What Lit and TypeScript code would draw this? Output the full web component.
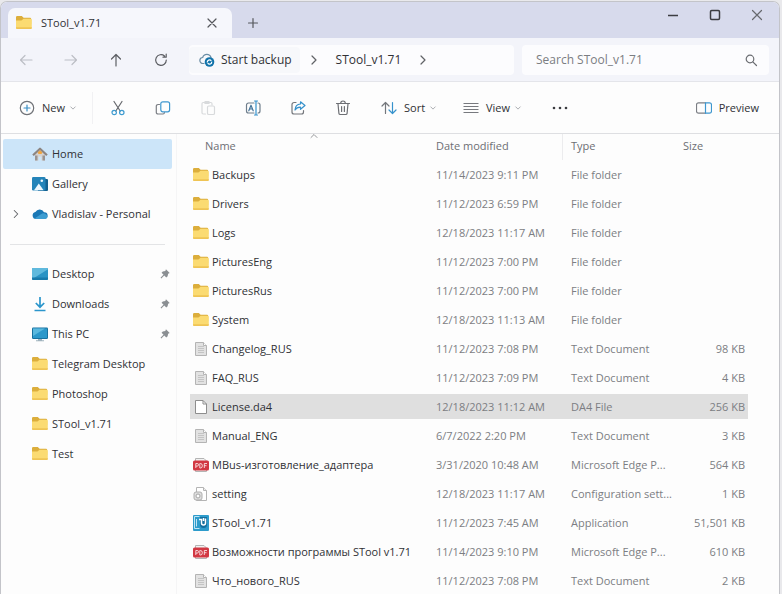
import { LitElement, html, svg, css, nothing } from "lit";
import { customElement, property } from "lit/decorators.js";
import { classMap } from "lit/directives/class-map.js";

const folder = svg`
  <path fill="#dcae3c" d="M0 2.200a1.200 1.200 0 0 1 1.200-1.200h4.600l1.800 1.800H14a1.200 1.200 0 0 1 1.200 1.200V9H0z"/>
  <path fill="#fbdb72" d="M0 5.600h5.400L7.600 3.800H14.600A1.200 1.200 0 0 1 15.800 5V12.800a1.200 1.200 0 0 1-1.200 1.200H1.200A1.200 1.200 0 0 1 0 12.800z"/>
  <path fill="#efc455" d="M0 12.200h15.800v.6a1.200 1.200 0 0 1-1.200 1.200H1.200A1.200 1.200 0 0 1 0 12.800z"/>`;

const icons: Record<string, unknown> = {
  folder,
  doc: svg`
    <path fill="#e2e2e2" stroke="#b4b4b4" d="M2.500 1.500h8l3 3v10h-11z"/>
    <path fill="none" stroke="#c4c4c4" d="M5 5.500h6M5 7.500h6M5 9.500h6M5 11.500h6"/>
    <path fill="#fff" stroke="#b4b4b4" d="M10.500 1.500v3h3"/>`,
  blank: svg`
    <path fill="#fff" stroke="#8d8d8d" d="M2.500 1.500h7.500l3.500 3.500v9.500h-11z"/>
    <path fill="none" stroke="#8d8d8d" d="M10 1.500v3.500h3.500"/>`,
  setting: svg`
    <path fill="#fff" stroke="#b4b4b4" d="M3.500 1.500h7l3 3v10h-10z"/>
    <path fill="#eee" stroke="#b4b4b4" d="M10.500 1.500v3h3"/>
    <rect x="1" y="6" width="8" height="8" rx="2" fill="#dedede" stroke="#b0b0b0"/>
    <circle cx="5" cy="10" r="2" fill="#fff" stroke="#a5a5a5"/>`,
  pdf: svg`
    <path fill="#f2f2f2" stroke="#b4b4b4" d="M2.500 1.500h8.500l2.500 2.500v10.500h-11z"/>
    <rect x="0" y="3.500" width="16" height="10" rx="1.500" fill="#d23843"/>
    <path fill="none" stroke="#fff" stroke-width=".9" opacity=".85" d="M2.800 11V6.500h1.400a1.200 1.200 0 0 1 0 2.600H2.800M6.800 6.500V11h.8a1.700 2.200 0 0 0 0-4.500zM11.300 11V6.500H14M11.300 8.700h2.200"/>`,
  app: svg`
    <rect width="16" height="16" rx="1" fill="#2d9bcb"/>
    <path fill="none" stroke="#bfe4f4" d="M1.500 1.500h5M1.500 1.500v12h5M3.500 4v7.500"/>
    <path fill="#126e9e" d="M7 2h7v7.500a3.500 3.500 0 0 1-7 0z"/>
    <path fill="none" stroke="#fff" stroke-width="1.500" d="M6 4.500h3M8.500 4v4a2 2 0 0 0 4 0V3.500M10.500 3v3"/>`,
  home: svg`
    <path fill="#d5d2d0" d="M3 7.500 8 3l5 4.500V14.500h-3.500v-4h-3v4H3z"/>
    <path fill="none" stroke="#8c8582" stroke-width="2.200" stroke-linejoin="round" d="M1 9.300 8 2.700l7 6.600"/>
    <path fill="#f0a540" d="M8 4.300 10.300 6.500 9.500 8h-3l-.8-1.500z"/>
    <path fill="#9b9491" d="M3 9.500h2.500v5H3zM10.500 9.500H13v5h-2.500z"/>`,
  gallery: svg`
    <path fill="#14618f" d="M4 3h11a1 1 0 0 1 1 1v10a1 1 0 0 1-1 1H6z"/>
    <rect x="0" y="1" width="13.500" height="13.500" rx="1.300" fill="#2484b9"/>
    <path fill="#eef8fd" d="m2 14.300 4.800-6.700 4.800 6.700z"/>
    <circle cx="9.800" cy="4.700" r="1.300" fill="#eef8fd"/>`,
  cloud: svg`
    <path fill="#1b78b5" d="M4 13a3.600 3.600 0 0 1-.6-7.100A4.800 4.800 0 0 1 12 6.200 3.400 3.400 0 0 1 12.500 13z"/>
    <path fill="#3d9dd2" d="M2.500 12.500 9 8.200a4 4 0 0 1 6.500 2.800A2.800 2.800 0 0 1 12.800 13H4z"/>`,
  desktop: svg`
    <rect x="0" y="2" width="16" height="12" rx="1.300" fill="#2a93c4"/>
    <path fill="#5fb9dd" d="M1.300 2h13.400A1.300 1.300 0 0 1 16 3.300L2 12H0V3.300A1.300 1.300 0 0 1 1.300 2z"/>
    <path fill="#187aab" d="M0 11.500h16v1.200a1.300 1.300 0 0 1-1.300 1.300H1.300A1.300 1.300 0 0 1 0 12.700z"/>`,
  downloads: svg`
    <path fill="none" stroke="#2b96cc" stroke-width="1.700" d="M8 1v10M3.800 7 8 11.200 12.200 7"/>
    <path stroke="#2b96cc" stroke-width="1.500" d="M2.500 14.500h11"/>`,
  pc: svg`
    <rect x="0" y="1.500" width="16" height="11.500" rx="1.300" fill="#17719f"/>
    <rect x="1" y="2.500" width="14" height="9.500" fill="#2c98ca"/>
    <path fill="#5ab8de" d="M1 2.500h12L1 10z"/>
    <path fill="#9fb2bd" d="M6 13h4v1.200h2v1H4v-1h2z"/>`,
  pin: svg`
    <path fill="#8b8f93" d="M9.500 0.500 15.500 6.500 13 7.500 12.200 11.500 10 13.500 2.500 6 4.500 3.800 8.500 3z"/>
    <path stroke="#8b8f93" stroke-width="1.800" d="M6.500 9.500 1.500 14.500"/>`,
  back: svg`<path class="ln" stroke="#bcbec5" d="M14 8H2.500M7 3.500 2.500 8 7 12.500"/>`,
  forward: svg`<path class="ln" stroke="#bcbec5" d="M2 8h11.500M9 3.500 13.500 8 9 12.500"/>`,
  up: svg`<path class="ln" stroke="#5c5e63" d="M8 14V2.500M3.500 7 8 2.500 12.500 7"/>`,
  refresh: svg`<path class="ln" stroke="#5c5e63" d="M13.300 8A5.300 5.300 0 1 1 11.500 4M13.200 2v3.200H10"/>`,
  backup: svg`
    <path class="ln" stroke="#6b8ea5" d="M5 11.500H4a3 3 0 0 1-.3-6 4.300 4.300 0 0 1 8.300 0"/>
    <circle cx="10.500" cy="10" r="4.800" fill="#1173aa"/>
    <path fill="none" stroke="#fff" stroke-width="1.200" d="M8.300 10.500a2.200 2.200 0 0 1 4-1.600M12.700 9.600a2.200 2.200 0 0 1-4 1.600"/>`,
  right: svg`<path class="ln" stroke="#606266" d="m6 4 4 4-4 4"/>`,
  down: svg`<path class="ln" stroke="#a3a5a9" d="m5 6.500 3 3 3-3"/>`,
  caret: svg`<path class="ln" stroke="#8a8c90" d="m4 10 4-4 4 4"/>`,
  search: svg`<circle class="ln" stroke="#6b6d72" cx="7" cy="7" r="3.800"/><path class="ln" stroke="#6b6d72" d="m9.800 9.800 3.700 3.700"/>`,
  close: svg`<path class="ln" stroke="#55575c" d="m4 4 8 8M12 4l-8 8"/>`,
  shut: svg`<path class="ln" stroke="#66686d" d="m3.500 3.500 9 9M12.500 3.500l-9 9"/>`,
  plus: svg`<path class="ln" stroke="#55575c" d="M8 3.500v9M3.500 8h9"/>`,
  minimize: svg`<path stroke="#3c3d42" stroke-width="1.400" d="M3 8.500h10"/>`,
  maximize: svg`<rect x="3.500" y="3.500" width="9" height="9" rx="1.200" fill="none" stroke="#3c3d42" stroke-width="1.500"/>`,
  add: svg`<circle class="ln" stroke="#707378" cx="8" cy="8" r="6.700"/><path class="ln" stroke="#3b8fc5" d="M8 5v6M5 8h6"/>`,
  cut: svg`
    <path class="ln" stroke="#66686d" d="M4 1.500 10.200 11M12 1.500 5.800 11"/>
    <circle class="ln" stroke="#3e9bd0" cx="4.200" cy="12.500" r="2.200"/>
    <circle class="ln" stroke="#3e9bd0" cx="11.800" cy="12.500" r="2.200"/>`,
  copy: svg`
    <path class="ln" stroke="#7b7e84" d="M4.500 4.500H3A1.700 1.700 0 0 0 1.300 6.200v6A1.700 1.700 0 0 0 3 14h5a1.700 1.700 0 0 0 1.500-1.500"/>
    <rect class="ln" stroke="#3e97cf" x="5.800" y="1.800" width="8.800" height="10" rx="2"/>`,
  paste: svg`
    <path class="ln" stroke="#d8dadc" d="M5.500 14H3.200A1.200 1.200 0 0 1 2 12.800V3.700a1.200 1.200 0 0 1 1.200-1.200h7.600A1.200 1.200 0 0 1 12 3.700V5M5 1.500h4v2H5z"/>
    <rect class="ln" stroke="#d8dadc" x="7.500" y="6" width="7" height="8.500" rx="1.300"/>`,
  rename: svg`
    <path class="ln" stroke="#6f7e8c" d="M9 3H3.500a2 2 0 0 0-2 2v6a2 2 0 0 0 2 2H9M13 3a2 2 0 0 1 2 2v6a2 2 0 0 1-2 2"/>
    <path class="ln" stroke="#3692cc" d="M11 1.500v13M9.500 1h3M9.500 15h3"/>
    <path class="ln" stroke="#44749a" d="m3.800 10.800 2.200-5.600 2.200 5.600M4.600 9h2.800"/>`,
  share: svg`
    <path class="ln" stroke="#74777c" d="M6 2.500H4a2 2 0 0 0-2 2V12a2 2 0 0 0 2 2h7.500a2 2 0 0 0 2-2v-1.500"/>
    <path class="ln" stroke="#3692cc" d="M10.500 1.800 15 5.500l-4.500 3.800V7.200C7.800 7.100 6.300 8 5 10c.2-3.300 2-5.800 5.500-6z"/>`,
  trash: svg`<path class="ln" stroke="#6d6f74" d="M1.500 3.500h13M5.700 3.300a2.300 2.300 0 0 1 4.600 0M3 3.700l.9 9.600a1.400 1.400 0 0 0 1.400 1.200h5.400a1.400 1.400 0 0 0 1.400-1.200l.9-9.600M6.600 6.500v5M9.400 6.500v5"/>`,
  sort: svg`
    <path class="ln" stroke="#74777c" d="M4.500 13.500v-11M1 6l3.500-3.500L8 6"/>
    <path class="ln" stroke="#3692cc" d="M11.500 2.500v11M8 10l3.500 3.500L15 10"/>`,
  view: svg`<path stroke="#77797e" d="M.5 3.500h15M.5 6.500h15M.5 9.500h15M.5 12.500h15"/>`,
  more: svg`<circle cx="2" cy="8" r="1.300" fill="#3b3c40"/><circle cx="8" cy="8" r="1.300" fill="#3b3c40"/><circle cx="14" cy="8" r="1.300" fill="#3b3c40"/>`,
  preview: svg`
    <path class="ln" stroke="#7b7e84" d="M9.500 2.800h-7a2 2 0 0 0-2 2v6.400a2 2 0 0 0 2 2h7"/>
    <path class="ln" stroke="#3e97cf" d="M9.500 2.800h4a2 2 0 0 1 2 2v6.400a2 2 0 0 1-2 2h-4z"/>`,
};

@customElement("fx-icon")
class FxIcon extends LitElement {
  @property() name = "folder";

  static styles = css`
    :host { display: inline-flex; flex: none; width: 16px; height: 16px; }
    .art { width: 100%; height: 100%; }
    .ln { fill: none; stroke-width: 1.2; stroke-linecap: round; stroke-linejoin: round; }
  `;

  render() {
    return html`<svg class="art" viewBox="0 0 16 16" aria-hidden="true">${icons[this.name]}</svg>`;
  }
}

interface Place { icon: string; label: string; pinned?: boolean; expands?: boolean; current?: boolean }

const topPlaces: Place[] = [
  { icon: "home", label: "Home", current: true },
  { icon: "gallery", label: "Gallery" },
  { icon: "cloud", label: "Vladislav - Personal", expands: true },
];

const quickPlaces: Place[] = [
  { icon: "desktop", label: "Desktop", pinned: true },
  { icon: "downloads", label: "Downloads", pinned: true },
  { icon: "pc", label: "This PC", pinned: true },
  { icon: "folder", label: "Telegram Desktop" },
  { icon: "folder", label: "Photoshop" },
  { icon: "folder", label: "STool_v1.71" },
  { icon: "folder", label: "Test" },
];

const files: [string, string, string, string, string][] = [
  ["folder", "Backups", "11/14/2023 9:11 PM", "File folder", ""],
  ["folder", "Drivers", "11/12/2023 6:59 PM", "File folder", ""],
  ["folder", "Logs", "12/18/2023 11:17 AM", "File folder", ""],
  ["folder", "PicturesEng", "11/12/2023 7:00 PM", "File folder", ""],
  ["folder", "PicturesRus", "11/12/2023 7:00 PM", "File folder", ""],
  ["folder", "System", "12/18/2023 11:13 AM", "File folder", ""],
  ["doc", "Changelog_RUS", "11/12/2023 7:08 PM", "Text Document", "98 KB"],
  ["doc", "FAQ_RUS", "11/12/2023 7:09 PM", "Text Document", "4 KB"],
  ["blank", "License.da4", "12/18/2023 11:12 AM", "DA4 File", "256 KB"],
  ["doc", "Manual_ENG", "6/7/2022 2:20 PM", "Text Document", "3 KB"],
  ["pdf", "MBus-изготовление_адаптера", "3/31/2020 10:48 AM", "Microsoft Edge P...", "564 KB"],
  ["setting", "setting", "12/18/2023 11:17 AM", "Configuration sett...", "1 KB"],
  ["app", "STool_v1.71", "11/12/2023 7:45 AM", "Application", "51,501 KB"],
  ["pdf", "Возможности программы STool v1.71", "11/14/2023 9:10 PM", "Microsoft Edge P...", "610 KB"],
  ["doc", "Что_нового_RUS", "11/12/2023 7:08 PM", "Text Document", "2 KB"],
];

@customElement("app-root")
class AppRoot extends LitElement {
  @property() selected = "License.da4";

  static styles = css`
    :host {
      display: block;
      height: 100vh;
      box-sizing: border-box;
      padding: 1px 2px 0 0;
      background: #e9e9ec;
      color: #303135;
      font: 11px/16px "Open Sans", "Noto Sans", sans-serif;
    }
    * { box-sizing: border-box; }
    button, input { font: inherit; color: inherit; border: 0; background: none; padding: 0; margin: 0; }
    button { display: inline-flex; align-items: center; justify-content: center; }
    a { color: inherit; text-decoration: none; }
    .window {
      display: flex;
      flex-direction: column;
      height: 100%;
      border: 1px solid #c3c4c9;
      border-bottom: 0;
      border-radius: 7px 7px 0 0;
      background: #fdfdfd;
      overflow: hidden;
    }
    .titlebar { display: flex; flex: none; height: 36px; padding: 0 1px 0 7px; background: #d7daec; }
    .tab {
      display: flex;
      align-items: center;
      width: 224px;
      margin-top: 6px;
      padding: 0 12px 0 8px;
      gap: 9px;
      border-radius: 7px 7px 0 0;
      background: #f6f7fc;
      font-weight: 500;
    }
    .tab-title { flex: 1; }
    .new-tab { width: 42px; padding-top: 6px; }
    .controls { display: flex; margin-left: auto; }
    .control { width: 42px; height: 25px; }
    .navbar {
      display: flex;
      flex: none;
      align-items: center;
      height: 44px;
      padding-right: 10px;
      background: #f3f4fa;
      border-bottom: 1px solid #e4e5ea;
      font-size: 12px;
    }
    .nav-buttons { display: flex; padding: 0 6px 0 2px; }
    .nav-button { width: 45px; height: 30px; }
    .address {
      display: flex;
      align-items: center;
      flex: 325;
      height: 30px;
      border-radius: 4px;
      background: #fcfcfe;
    }
    .crumb { height: 26px; padding: 0 8px; gap: 6px; border-radius: 4px; }
    .crumb-root { padding-left: 10px; background: #f7f8fb; }
    .crumb-step { width: 28px; height: 26px; }
    .search {
      display: flex;
      align-items: center;
      flex: 223;
      height: 30px;
      margin-left: 8px;
      padding: 0 10px 0 14px;
      border-radius: 4px;
      background: #fcfcfe;
    }
    .search-box { flex: 1; min-width: 0; outline: 0; }
    .search-box::placeholder { color: #7b7d82; opacity: 1; }
    .toolbar {
      display: flex;
      flex: none;
      align-items: center;
      height: 52px;
      padding-right: 20px;
      border-bottom: 1px solid #dedfe2;
    }
    .tool { width: 45px; height: 32px; }
    .menu { justify-content: flex-start; height: 32px; gap: 2px; }
    .menu-label { padding-left: 5px; }
    .menu-new { width: 92px; padding-left: 18px; margin-right: 2px; border-right: 1px solid #f1f1f3; }
    .menu-sort, .menu-view { width: 82px; padding-left: 16px; }
    .tool-more { margin-left: 8px; }
    .menu-preview { margin-left: auto; }
    .chevron { width: 12px; height: 12px; }
    .body { display: flex; flex: 1; min-height: 0; }
    .sidebar { flex: none; width: 176px; padding: 5px 4px 0 2px; border-right: 1px solid #f5f5f6; }
    .place { display: flex; align-items: center; height: 30px; padding-right: 2px; border-radius: 2px; }
    .place.current { background: #cce5f9; }
    .expander { display: flex; justify-content: center; width: 29px; padding-right: 3px; }
    .expander fx-icon { width: 14px; height: 14px; }
    .place-label { flex: 1; padding-left: 4px; }
    .pin { width: 10px; height: 10px; }
    .rule { height: 1px; margin: 15px 7px 14px; border: 0; background: #e3e4e6; }
    .pane { flex: 1; min-width: 0; padding: 0 31px 0 13px; overflow-y: auto; scrollbar-width: none; }
    .files { width: 100%; table-layout: fixed; border-collapse: separate; border-spacing: 0; }
    .files th { height: 26px; padding: 0 4px 3px; text-align: left; font-weight: 400; color: #6d6f74; }
    .files .col-name { padding-left: 15px; position: relative; }
    .sorted { position: absolute; left: calc(50% - 3px); top: -4px; width: 12px; height: 12px; }
    .col-date { width: 135px; }
    .files .col-type { width: 112px; box-shadow: -4px 0 #fdfdfd, -5px 0 #ececee; }
    .col-size { width: 69px; }
    .files td {
      height: 29px;
      padding: 0 4px;
      border: solid transparent;
      border-width: 2px 0;
      background-clip: padding-box;
      color: #7c7e83;
      white-space: nowrap;
    }
    .files .name { padding-left: 3px; color: #303135; }
    .files .size { padding-right: 3px; text-align: right; }
    .chosen td { background-color: #dfdfdf; }
    .file { display: flex; align-items: center; gap: 3px; }
  `;

  private tool(icon: string, label: string) {
    return html`<button class="tool" aria-label=${label}><fx-icon name=${icon}></fx-icon></button>`;
  }

  private menu(icon: string, label: string, kind: string) {
    return html`<button class="menu ${kind}">
      <fx-icon name=${icon}></fx-icon><span class="menu-label">${label}</span><fx-icon class="chevron" name="down"></fx-icon>
    </button>`;
  }

  private place(p: Place) {
    return html`<a href="#" class=${classMap({ place: true, current: !!p.current })}>
      <span class="expander">${p.expands ? html`<fx-icon name="right"></fx-icon>` : nothing}</span>
      <fx-icon name=${p.icon}></fx-icon>
      <span class="place-label">${p.label}</span>
      ${p.pinned ? html`<fx-icon class="pin" name="pin"></fx-icon>` : nothing}
    </a>`;
  }

  render() {
    return html`
      <div class="window">
        <header class="titlebar">
          <div class="tab">
            <fx-icon name="folder"></fx-icon>
            <span class="tab-title">STool_v1.71</span>
            <button aria-label="Close tab"><fx-icon name="close"></fx-icon></button>
          </div>
          <button class="new-tab" aria-label="New tab"><fx-icon name="plus"></fx-icon></button>
          <div class="controls">
            <button class="control" aria-label="Minimize"><fx-icon name="minimize"></fx-icon></button>
            <button class="control" aria-label="Maximize"><fx-icon name="maximize"></fx-icon></button>
            <button class="control" aria-label="Close"><fx-icon name="shut"></fx-icon></button>
          </div>
        </header>
        <nav class="navbar">
          <div class="nav-buttons">
            <button class="nav-button" aria-label="Back"><fx-icon name="back"></fx-icon></button>
            <button class="nav-button" aria-label="Forward"><fx-icon name="forward"></fx-icon></button>
            <button class="nav-button" aria-label="Up"><fx-icon name="up"></fx-icon></button>
            <button class="nav-button" aria-label="Refresh"><fx-icon name="refresh"></fx-icon></button>
          </div>
          <div class="address">
            <button class="crumb crumb-root"><fx-icon name="backup"></fx-icon>Start backup</button>
            <button class="crumb-step" aria-label="Expand"><fx-icon name="right"></fx-icon></button>
            <button class="crumb">STool_v1.71</button>
            <button class="crumb-step" aria-label="Expand folder"><fx-icon name="right"></fx-icon></button>
          </div>
          <label class="search">
            <input class="search-box" type="text" placeholder="Search STool_v1.71" aria-label="Search" />
            <fx-icon name="search"></fx-icon>
          </label>
        </nav>
        <div class="toolbar">
          ${this.menu("add", "New", "menu-new")}
          ${this.tool("cut", "Cut")} ${this.tool("copy", "Copy")} ${this.tool("paste", "Paste")}
          ${this.tool("rename", "Rename")} ${this.tool("share", "Share")} ${this.tool("trash", "Delete")}
          ${this.menu("sort", "Sort", "menu-sort")}
          ${this.menu("view", "View", "menu-view")}
          <button class="tool tool-more" aria-label="More"><fx-icon name="more"></fx-icon></button>
          <button class="menu menu-preview"><fx-icon name="preview"></fx-icon><span class="menu-label">Preview</span></button>
        </div>
        <div class="body">
          <nav class="sidebar">
            ${topPlaces.map((p) => this.place(p))}
            <hr class="rule" />
            ${quickPlaces.map((p) => this.place(p))}
          </nav>
          <main class="pane">
            <table class="files">
              <thead>
                <tr>
                  <th class="col-name">Name<fx-icon class="sorted" name="caret"></fx-icon></th>
                  <th class="col-date">Date modified</th>
                  <th class="col-type">Type</th>
                  <th class="col-size">Size</th>
                </tr>
              </thead>
              <tbody>
                ${files.map(([icon, name, date, type, size]) => html`
                  <tr class=${classMap({ chosen: name === this.selected })}>
                    <td class="name"><span class="file"><fx-icon name=${icon}></fx-icon>${name}</span></td>
                    <td>${date}</td>
                    <td>${type}</td>
                    <td class="size">${size}</td>
                  </tr>`)}
              </tbody>
            </table>
          </main>
        </div>
      </div>
    `;
  }
}
